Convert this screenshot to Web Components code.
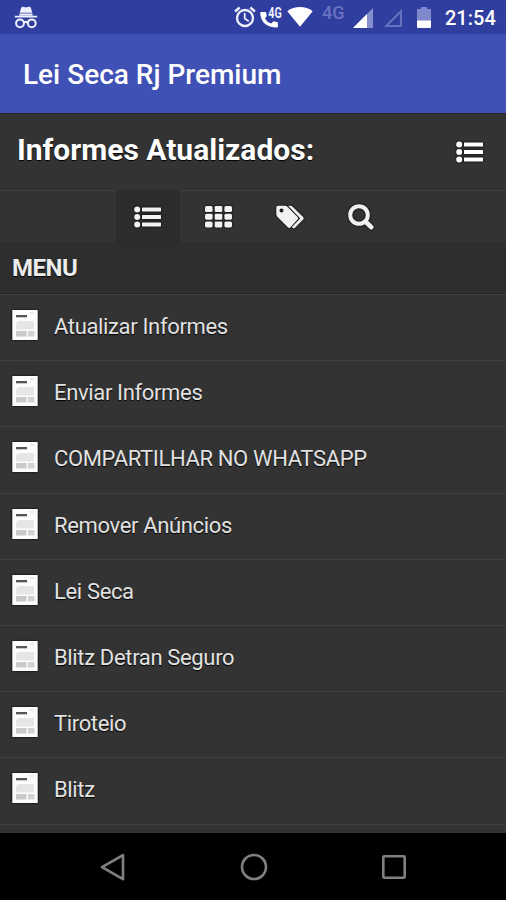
<!DOCTYPE html>
<html lang="pt-BR">
<head>
<meta charset="utf-8">
<meta name="viewport" content="width=device-width, initial-scale=1">
<title>Lei Seca Rj Premium</title>
<style>
  html, body {
    margin: 0;
    height: 100%;
    background: #000;
    overflow: hidden;
  }
</style>
</head>
<body>
<lei-seca-app></lei-seca-app>

<script>
const ICONS = {
  list: `<svg viewBox="0 0 27 22" width="27" height="22"><g fill="currentColor">
    <circle cx="3.2" cy="3.6" r="3"/><circle cx="3.2" cy="11" r="3"/><circle cx="3.2" cy="18.4" r="3"/>
    <rect x="8" y="1.6" width="19" height="4" rx=".6"/><rect x="8" y="9" width="19" height="4" rx=".6"/><rect x="8" y="16.4" width="19" height="4" rx=".6"/></g></svg>`,
  grid: `<svg viewBox="0 0 27 22" width="27" height="22"><g fill="currentColor">
    <rect width="7.6" height="6" rx="1.6"/><rect x="9.7" width="7.6" height="6" rx="1.3"/><rect x="19.4" width="7.6" height="6" rx="1.6"/>
    <rect y="7.7" width="7.6" height="6" rx="1.6"/><rect x="9.7" y="7.7" width="7.6" height="6" rx="1.3"/><rect x="19.4" y="7.7" width="7.6" height="6" rx="1.6"/>
    <rect y="15.4" width="7.6" height="6" rx="1.6"/><rect x="9.7" y="15.4" width="7.6" height="6" rx="1.3"/><rect x="19.4" y="15.4" width="7.6" height="6" rx="1.6"/></g></svg>`,
  tags: `<svg viewBox="0 0 28 24" width="28" height="24"><g fill="currentColor">
    <path fill-rule="evenodd" d="M.3 2.4Q.3.7 2 .7H9Q10.4.7 11.6 1.9L21.6 11.9Q22.9 13.2 21.6 14.6L14.6 22.2Q13.2 23.6 11.8 22.2L1.6 12Q.3 10.7.3 9.2ZM5.5 3.6A2 2 0 1 0 5.5 7.6A2 2 0 1 0 5.5 3.6Z"/>
    <path d="M12 .7h2.3q1.3 0 2.3 1l10.5 10.3q1.3 1.3 0 2.6l-7.8 7.9q-1.400 1.300-2.700.2l-.7-.7 7.500-7.800q.9-.9 0-1.800Z"/></g></svg>`,
  search: `<svg viewBox="0 0 26 26" width="26" height="26"><g fill="none" stroke="currentColor">
    <circle cx="11" cy="11" r="8.800" stroke-width="4"/><path d="M17.500 17.500l5.700 5.700" stroke-width="4.600" stroke-linecap="round"/></g></svg>`,
  incognito: `<svg viewBox="0 0 24 24" width="24" height="24"><g fill="#eef0ff">
    <path d="M7 2.200Q7.500.2 9.200.8L12 1.600l2.800-.8Q16.500.2 17 2.200L18.300 6.800H5.700ZM5.600 7.400h12.800l.4 2.200H5.200ZM.8 9.800h22.400v1.700H.8Z"/>
    <g fill="none" stroke="#eef0ff" stroke-width="2"><circle cx="6" cy="17.300" r="3.900"/><circle cx="17.800" cy="17.300" r="3.900"/><path d="M10 16.600q1.900-1.500 3.800 0"/></g></g></svg>`,
  alarm: `<svg viewBox="0 0 22 22" width="22" height="22"><g fill="none" stroke="#eef0ff">
    <circle cx="11" cy="12" r="8" stroke-width="2.300"/><path d="M1 5.500L5.700 1.500M21 5.500L16.300 1.500" stroke-width="2.300"/><path d="M10.700 7v5.500l4 2.700" stroke-width="1.700"/></g></svg>`,
  call: `<svg viewBox="0 0 22 22" width="22" height="22">
    <path fill="#fff" d="M1.200 6h4q.8 0 1 .8l.5 2.800q.1.600-.4 1.100L4.900 12.400q2 3.600 6.200 5.200l1.800-1.900q.5-.5 1.200-.3l3 .6q.8.200.8 1v3.500q0 1-1 1Q1 21 .2 7q0-1 1-1Z"/>
    <text x="8.300" y="11.500" textLength="13.500" lengthAdjust="spacingAndGlyphs" font-family="Roboto, sans-serif" font-size="14" font-weight="700" fill="#eef0ff">4G</text></svg>`,
  wifi: `<svg viewBox="0 0 26 20" width="26" height="20"><path fill="#fff" d="M.3 4.200Q6 0 13 0t12.700 4.200L13 19.700Z"/></svg>`,
  signal: `<svg viewBox="0 0 20 20" width="20" height="20"><path fill="#8790cf" d="M20 0v20H0Z"/><path fill="#fff" d="M14 6v14H0Z"/></svg>`,
  noSignal: `<svg viewBox="0 0 20 20" width="20" height="20"><path fill="none" stroke="#6871be" stroke-width="2" d="M18 3.200V18H3.200Z"/></svg>`,
  battery: `<svg viewBox="0 0 14 21" width="14" height="21"><path fill="#7f88cb" d="M4 0h6v2h4v12H0V2h4Z"/><path fill="#fff" d="M0 13.500h14V20q0 1-1 1H1q-1 0-1-1Z"/></svg>`,
  doc: `<svg viewBox="0 0 26 30" width="26" height="30"><rect x=".3" width="25.400" height="30" rx=".5" fill="#fcfcfc"/>
    <rect x="4" y="5" width="11" height="2.300" fill="#555"/><path stroke="#d8d8d8" d="M18 3h4"/>
    <path fill="#e6e6e6" d="M6.500 11H22v8.500H4V13Z"/><rect x="4" y="21" width="10.500" height="5.500" fill="#cacaca"/><rect x="16" y="21" width="6.500" height="5.500" fill="#d2d2d2"/></svg>`,
  back: `<svg viewBox="0 0 30 30" width="30" height="30"><path d="M25 3.200v24L4 15.200Z" fill="none" stroke="#808080" stroke-width="2.600" stroke-linejoin="round"/></svg>`,
  home: `<svg viewBox="0 0 30 30" width="30" height="30"><circle cx="15" cy="15" r="12" fill="none" stroke="#808080" stroke-width="2.600"/></svg>`,
  recent: `<svg viewBox="0 0 30 30" width="30" height="30"><rect x="4.300" y="4.300" width="21.400" height="21.400" rx="1" fill="none" stroke="#808080" stroke-width="2.600"/></svg>`
};

/**
 * Inline SVG icon, picked with the name attribute
 */
class UiIcon extends HTMLElement {
  constructor() {
    super();
    this.attachShadow({ mode: 'open' });
  }

  connectedCallback() {
    this.shadowRoot.innerHTML = `
      <style>
        :host { display: block; flex: none; }
        svg { display: block; overflow: visible; }
      </style>
      ${ICONS[this.getAttribute('name')] || ''}
    `;
  }
}

/**
 * Android status bar
 */
class StatusBar extends HTMLElement {
  constructor() {
    super();
    this.attachShadow({ mode: 'open' });
  }

  connectedCallback() {
    this.shadowRoot.innerHTML = `
      <style>
        :host {
          display: flex;
          box-sizing: border-box;
          height: 34px;
          padding: 6px 10px 0 14px;
          background: #2f3e9f;
          color: #fff;
        }
        .right {
          display: flex;
          align-items: flex-start;
          margin-left: auto;
        }
        .net {
          width: 24px;
          margin: -3px 0 0 9px;
          font-size: 18px;
          font-weight: 500;
          line-height: 20px;
          color: #6973bf;
        }
        .time {
          width: 51px;
          margin: 0 0 0 14px;
          font-size: 20px;
          font-weight: 500;
          line-height: 24px;
          white-space: nowrap;
        }
      </style>
      <ui-icon name="incognito"></ui-icon>
      <div class="right">
        <ui-icon name="alarm" style="margin-right:4px"></ui-icon>
        <ui-icon name="call" style="margin-right:5px"></ui-icon>
        <ui-icon name="wifi" style="margin-top:1px"></ui-icon>
        <span class="net">4G</span>
        <ui-icon name="signal" style="margin:2px 0 0 7px"></ui-icon>
        <ui-icon name="noSignal" style="margin:2px 0 0 10px"></ui-icon>
        <ui-icon name="battery" style="margin:1px 0 0 14px"></ui-icon>
        <span class="time">21:54</span>
      </div>
    `;
  }
}

/**
 * Blue bar with the app name
 */
class AppBar extends HTMLElement {
  constructor() {
    super();
    this.attachShadow({ mode: 'open' });
    this.shadowRoot.innerHTML = `
      <style>
        :host {
          display: flex;
          align-items: center;
          box-sizing: border-box;
          height: 79px;
          padding: 2px 23px 0;
          background: #3f51b5;
          color: #fff;
          font-size: 28px;
          font-weight: 500;
        }
      </style>
      <slot></slot>
    `;
  }
}

/**
 * Page heading with the list toggle on the right
 */
class PageHeading extends HTMLElement {
  constructor() {
    super();
    this.attachShadow({ mode: 'open' });
    this.shadowRoot.innerHTML = `
      <style>
        :host {
          display: flex;
          align-items: center;
          justify-content: space-between;
          box-sizing: border-box;
          height: 77px;
          padding: 0 23px 4px 17px;
          border-top: 1px solid #24242a;
          color: #fff;
          text-shadow: 0 1px 1px #000;
        }
        h1 { margin: 0; font-size: 30px; font-weight: 700; line-height: 36px; }
        ui-icon { margin-top: 3px; filter: drop-shadow(0 0 1px #000); }
      </style>
      <h1><slot></slot></h1>
      <ui-icon name="list"></ui-icon>
    `;
  }
}

/**
 * Row of icon tabs, the first one is selected
 */
class IconTabs extends HTMLElement {
  constructor() {
    super();
    this.attachShadow({ mode: 'open' });
    const tabs = ['list', 'grid', 'tags', 'search'];
    this.shadowRoot.innerHTML = `
      <style>
        :host {
          display: flex;
          justify-content: center;
          gap: 7px;
          box-sizing: border-box;
          height: 52px;
          padding-left: 2px;
          border-top: 1px solid #424242;
          color: #f2f2f2;
        }
        .tab {
          display: flex;
          align-items: center;
          justify-content: center;
          width: 64px;
          height: 51px;
        }
        .tab.active { background: #2c2c2c; height: 56px; margin-top: -1px; }
        .tab.active ui-icon { margin-top: -2px; }
        ui-icon { filter: drop-shadow(0 0 1px #000); }
      </style>
      ${tabs.map((t, i) => `<div class="tab ${i === 0 ? 'active' : ''}"><ui-icon name="${t}"></ui-icon></div>`).join('')}
    `;
  }
}

/**
 * Entry of the menu list
 */
class MenuItem extends HTMLElement {
  constructor() {
    super();
    this.attachShadow({ mode: 'open' });
    this.shadowRoot.innerHTML = `
      <style>
        :host {
          display: flex;
          align-items: flex-start;
          box-sizing: border-box;
          height: 66.2px;
          padding: 15px 12px 0;
          border-top: 1px solid #404040;
          color: #e2e2e2;
          font-size: 22px;
          letter-spacing: -0.35px;
          line-height: 34px;
          text-shadow: 0 1px 1px #000;
        }
        ui-icon { margin-right: 16px; filter: drop-shadow(0 0 1px #000); }
      </style>
      <ui-icon name="doc"></ui-icon>
      <span><slot></slot></span>
    `;
  }
}

/**
 * Menu section: title on a darker strip, items below
 */
class MenuList extends HTMLElement {
  constructor() {
    super();
    this.attachShadow({ mode: 'open' });
    this.shadowRoot.innerHTML = `
      <style>
        :host { display: block; }
        h2 {
          box-sizing: border-box;
          height: 52px;
          margin: 0;
          padding: 0 12px;
          background: #2e2e2e;
          color: #ececec;
          font-size: 24px;
          font-weight: 700;
          letter-spacing: -0.5px;
          line-height: 52px;
          text-shadow: 0 1px 1px #000;
          border-bottom: 1px solid #292929;
        }
        .end { border-top: 1px solid #404040; }
      </style>
      <h2><slot name="title"></slot></h2>
      <slot></slot>
      <div class="end"></div>
    `;
  }
}

/**
 * Android navigation keys
 */
class NavBar extends HTMLElement {
  constructor() {
    super();
    this.attachShadow({ mode: 'open' });
  }

  connectedCallback() {
    this.shadowRoot.innerHTML = `
      <style>
        :host {
          display: flex;
          justify-content: center;
          gap: 110.5px;
          box-sizing: border-box;
          height: 67px;
          padding: 19px 0 0 1px;
          background: #000;
        }
      </style>
      <ui-icon name="back"></ui-icon>
      <ui-icon name="home"></ui-icon>
      <ui-icon name="recent"></ui-icon>
    `;
  }
}

class LeiSecaApp extends HTMLElement {
  constructor() {
    super();
    this.attachShadow({ mode: 'open' });
  }

  connectedCallback() {
    const items = [
      'Atualizar Informes',
      'Enviar Informes',
      'COMPARTILHAR NO WHATSAPP',
      'Remover Anúncios',
      'Lei Seca',
      'Blitz Detran Seguro',
      'Tiroteio',
      'Blitz'
    ];
    this.shadowRoot.innerHTML = `
      <style>
        :host {
          display: flex;
          flex-direction: column;
          width: 506px;
          height: 900px;
          background: #333;
          font-family: Roboto, sans-serif;
        }
        main { flex: 1; min-height: 0; overflow: hidden; }
      </style>
      <status-bar></status-bar>
      <app-bar>Lei Seca Rj Premium</app-bar>
      <main>
        <page-heading>Informes Atualizados:</page-heading>
        <icon-tabs></icon-tabs>
        <menu-list>
          <span slot="title">MENU</span>
          ${items.map(text => `<menu-item>${text}</menu-item>`).join('')}
        </menu-list>
      </main>
      <nav-bar></nav-bar>
    `;
  }
}

customElements.define('ui-icon', UiIcon);
customElements.define('status-bar', StatusBar);
customElements.define('app-bar', AppBar);
customElements.define('page-heading', PageHeading);
customElements.define('icon-tabs', IconTabs);
customElements.define('menu-item', MenuItem);
customElements.define('menu-list', MenuList);
customElements.define('nav-bar', NavBar);
customElements.define('lei-seca-app', LeiSecaApp);
</script>
</body>
</html>
